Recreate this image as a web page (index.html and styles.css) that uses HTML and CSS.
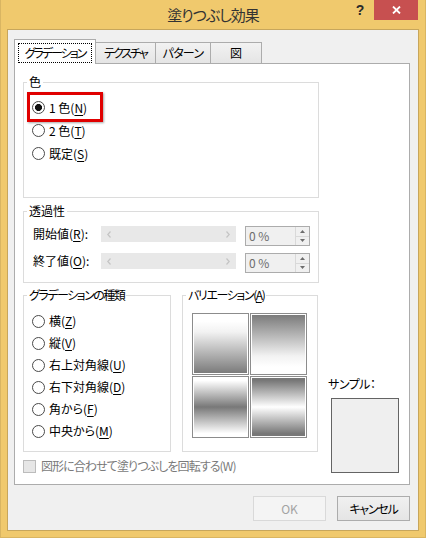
FILE: index.html
```html
<!DOCTYPE html>
<html lang="ja">
<head>
<meta charset="utf-8">
<title>塗りつぶし効果</title>
<link rel="stylesheet" href="styles.css">
</head>
<body>
<div class="window">
  <div class="titlebar">
    <div class="title">塗りつぶし効果</div>
    <div class="controls">
      <div class="help">?</div>
      <div class="close">
        <svg width="9" height="8" viewBox="0 0 9 8"><path d="M1 0.5 L8 7.5 M8 0.5 L1 7.5" stroke="#fff" stroke-width="1.8" fill="none"/></svg>
      </div>
    </div>
  </div>
  <div class="client">
    <div class="tabs">
      <div class="tab active"><span class="focus">グラデーション</span></div>
      <div class="tab t2">テクスチャ</div>
      <div class="tab t3">パターン</div>
      <div class="tab t4">図</div>
    </div>
    <div class="panel">
      <fieldset class="group g-color">
        <legend>色</legend>
        <div class="gc">
          <div class="radio-row hl"><span class="radio on"></span><span>1 色(<u>N</u>)</span><span class="mark"></span></div>
          <div class="radio-row"><span class="radio"></span><span>2 色(<u>T</u>)</span></div>
          <div class="radio-row"><span class="radio"></span><span>既定(<u>S</u>)</span></div>
        </div>
      </fieldset>
      <fieldset class="group g-trans">
        <legend>透過性</legend>
        <div class="gc">
          <div class="trans-row">
            <span class="trans-label">開始値(<u>R</u>):</span>
            <div class="slider">
              <svg width="4" height="7" viewBox="0 0 4 7"><path d="M3.5 0.5 L0.8 3.5 L3.5 6.5" stroke="#c4c4c4" stroke-width="1.2" fill="none"/></svg>
              <svg width="4" height="7" viewBox="0 0 4 7"><path d="M0.5 0.5 L3.2 3.5 L0.5 6.5" stroke="#c4c4c4" stroke-width="1.2" fill="none"/></svg>
            </div>
            <div class="spin">
              <span class="spin-val">0 %</span>
              <div class="spin-btns">
                <span class="sb"><svg width="5" height="3" viewBox="0 0 5 3"><path d="M2.5 0 L5 3 L0 3 Z" fill="#6d6d6d"/></svg></span>
                <span class="sb"><svg width="5" height="3" viewBox="0 0 5 3"><path d="M0 0 L5 0 L2.5 3 Z" fill="#6d6d6d"/></svg></span>
              </div>
            </div>
          </div>
          <div class="trans-row">
            <span class="trans-label">終了値(<u>O</u>):</span>
            <div class="slider">
              <svg width="4" height="7" viewBox="0 0 4 7"><path d="M3.5 0.5 L0.8 3.5 L3.5 6.5" stroke="#c4c4c4" stroke-width="1.2" fill="none"/></svg>
              <svg width="4" height="7" viewBox="0 0 4 7"><path d="M0.5 0.5 L3.2 3.5 L0.5 6.5" stroke="#c4c4c4" stroke-width="1.2" fill="none"/></svg>
            </div>
            <div class="spin">
              <span class="spin-val">0 %</span>
              <div class="spin-btns">
                <span class="sb"><svg width="5" height="3" viewBox="0 0 5 3"><path d="M2.5 0 L5 3 L0 3 Z" fill="#6d6d6d"/></svg></span>
                <span class="sb"><svg width="5" height="3" viewBox="0 0 5 3"><path d="M0 0 L5 0 L2.5 3 Z" fill="#6d6d6d"/></svg></span>
              </div>
            </div>
          </div>
        </div>
      </fieldset>
      <div class="bottom">
        <div class="bottom-left">
          <div class="bottom-groups">
            <fieldset class="group g-type">
              <legend class="lg-type">グラデーションの種類</legend>
              <div class="gc">
                <div class="radio-row r22"><span class="radio"></span><span>横(<u>Z</u>)</span></div>
                <div class="radio-row r22"><span class="radio"></span><span>縦(<u>V</u>)</span></div>
                <div class="radio-row r22"><span class="radio"></span><span>右上対角線(<u>U</u>)</span></div>
                <div class="radio-row r22"><span class="radio"></span><span>右下対角線(<u>D</u>)</span></div>
                <div class="radio-row r22"><span class="radio"></span><span>角から(<u>F</u>)</span></div>
                <div class="radio-row r22"><span class="radio"></span><span>中央から(<u>M</u>)</span></div>
              </div>
            </fieldset>
            <fieldset class="group g-var">
              <legend class="lg-var">バリエーション(<u>A</u>)</legend>
              <div class="gc">
                <div class="tiles">
                  <div class="tile v1"></div>
                  <div class="tile v2"></div>
                  <div class="tile v3"></div>
                  <div class="tile v4"></div>
                </div>
              </div>
            </fieldset>
          </div>
          <div class="check-row"><span class="check"></span><span class="check-text">図形に合わせて塗りつぶしを回転する(W)</span></div>
        </div>
        <div class="sample">
          <div class="sample-label">サンプル：</div>
          <div class="sample-box"></div>
        </div>
      </div>
    </div>
    <div class="buttons">
      <div class="btn disabled">OK</div>
      <div class="btn cancel">キャンセル</div>
    </div>
  </div>
</div>
</body>
</html>
```

FILE: styles.css
```css
* { box-sizing: border-box; }
html, body { margin: 0; padding: 0; }
body {
  width: 426px;
  height: 538px;
  overflow: hidden;
  font-family: "Noto Sans CJK JP", "Noto Sans", sans-serif;
  font-size: 12px;
  line-height: 16px;
  color: #000;
  font-feature-settings: "palt";
}
u { text-decoration-thickness: 1px; text-underline-offset: 2px; }

.window {
  width: 426px;
  height: 538px;
  background: #f0c96d;
  border: 1px solid #d9b562;
  border-top: 0;
  padding: 0 6px 6px;
  display: flex;
  flex-direction: column;
}

.titlebar { height: 29px; flex: none; display: grid; }
.titlebar > * { grid-area: 1 / 1; }
.title {
  justify-self: center;
  align-self: center;
  font-size: 15px;
  line-height: 20px;
  color: #333;
  letter-spacing: -1px;
}
.controls { justify-self: end; display: flex; align-items: flex-start; margin-right: 1px; }
.help {
  width: 28px;
  height: 20px;
  line-height: 21px;
  text-align: center;
  font-family: "Liberation Sans", sans-serif;
  font-weight: bold;
  font-size: 14px;
  color: #2b2b2b;
}
.close {
  width: 44px;
  height: 20px;
  background: #c75050;
  display: flex;
  align-items: center;
  justify-content: center;
}

.client {
  flex: 1;
  background: #f0f0f0;
  border: 1px solid #c7a65c;
  padding: 9px 8px 0 6px;
}

.tabs { display: flex; align-items: flex-end; height: 24px; }
.tab {
  height: 21px;
  border: 1px solid #acacac;
  border-bottom: 0;
  background: linear-gradient(#f2f2f2, #e5e5e5);
  text-align: center;
  line-height: 20px;
  margin-left: -1px;
  white-space: nowrap;
}
.tab.active {
  width: 82px;
  height: 25px;
  margin-left: 0;
  margin-bottom: -1px;
  background: #fff;
  position: relative;
  z-index: 1;
  padding: 3px 3px 0 3px;
}
.focus { display: block; height: 20px; border: 1px dotted #000; line-height: 18px; letter-spacing: -2px; }
.t2 { width: 61px; letter-spacing: -2px; }
.t3 { width: 56px; letter-spacing: -0.75px; }
.t4 { width: 52px; }

.panel {
  height: 422px;
  border: 1px solid #acacac;
  background: #fff;
  padding: 10px 0 0 8px;
}

.group {
  margin: 0;
  padding: 0;
  border: 1px solid #dcdcdc;
  min-width: 0;
}
.group > legend { padding: 0 2px; margin-left: 3px; line-height: 16px; white-space: nowrap; }
.lg-type { letter-spacing: -1.5px; }
.lg-var { letter-spacing: -1.4px; }

.g-color { width: 296px; height: 124px; }
.g-color .gc { padding: 6px 0 0 8px; }
.radio-row { display: flex; align-items: center; height: 23px; gap: 4px; }
.radio-row.r22 { height: 22px; }
.hl { position: relative; }
.mark {
  position: absolute;
  left: -5px;
  top: -4px;
  width: 76px;
  height: 30px;
  border: 3px solid #e00000;
  box-shadow: 1px 1px 2px rgba(0, 0, 0, 0.35);
}
.radio {
  width: 13px;
  height: 13px;
  border-radius: 50%;
  border: 1px solid #4a4a4a;
  background: #fff;
  flex: none;
}
.radio.on { background: radial-gradient(circle at center, #111 0 3.2px, #fff 3.8px); }

.g-trans { width: 296px; height: 80px; margin-top: 5px; }
.g-trans .gc { padding: 7px 0 0 9px; }
.trans-row { display: flex; align-items: flex-start; height: 20px; }
.trans-row + .trans-row { margin-top: 7px; }
.trans-label { width: 68px; line-height: 16px; }
.slider {
  width: 135px;
  height: 16px;
  background: #e8e8e8;
  display: flex;
  justify-content: space-between;
  align-items: center;
  padding: 0 6px;
}
.spin {
  margin-left: 9px;
  width: 65px;
  height: 20px;
  border: 1px solid #acacac;
  background: #f0f0f0;
  display: flex;
}
.spin-val { flex: 1; padding-left: 3px; line-height: 18px; color: #6d6d6d; font-size: 12px; }
.spin-btns { width: 14px; display: flex; flex-direction: column; border-left: 1px solid #d9d9d9; }
.sb { flex: 1; display: flex; align-items: center; justify-content: center; }
.sb + .sb { border-top: 1px solid #d9d9d9; }

.bottom { display: flex; margin-top: 4px; }
.bottom-left { width: 295px; }
.bottom-groups { display: flex; gap: 11px; }
.g-type { width: 148px; height: 165px; }
.g-type .gc { padding: 7px 0 0 8px; }
.g-var { width: 136px; height: 165px; }
.g-var .gc { padding: 10px 0 0 9px; }
.tiles { display: grid; grid-template-columns: 57px 57px; grid-template-rows: 62px 62px; gap: 1px; }
.tile { border: 1px solid #8c8c8c; box-shadow: inset 0 0 0 1px #fff; }
.v1 { background: linear-gradient(#fff 12%, #f2f2f2 30%, #787878 100%); }
.v2 { background: linear-gradient(#787878 0%, #f2f2f2 70%, #fff 88%); }
.v3 { background: linear-gradient(#fff 6%, #787878 50%, #fff 94%); }
.v4 { background: linear-gradient(#787878 6%, #fff 50%, #787878 94%); }

.check-row { display: flex; align-items: center; gap: 5px; margin-top: 6px; height: 16px; color: #7a7a7a; }
.check-text { letter-spacing: -0.9px; white-space: nowrap; }
.check { width: 13px; height: 13px; border: 1px solid #bcbcbc; background: #e6e6e6; flex: none; }

.sample { margin-left: 10px; padding-top: 89px; }
.sample-label { line-height: 16px; letter-spacing: -0.5px; white-space: nowrap; }
.sample-box { margin: 6px 0 0 3px; width: 68px; height: 75px; border: 1px solid #646464; background: #efefef; }

.buttons { display: flex; justify-content: flex-end; gap: 11px; margin-top: 11px; }
.btn {
  width: 73px;
  height: 25px;
  border: 1px solid #acacac;
  background: linear-gradient(#f0f0f0, #e5e5e5);
  line-height: 23px;
  text-align: center;
}
.btn.cancel { letter-spacing: -1.2px; }
.btn.disabled { border-color: #d9d9d9; background: #f4f4f4; color: #a3a3a3; }
```
